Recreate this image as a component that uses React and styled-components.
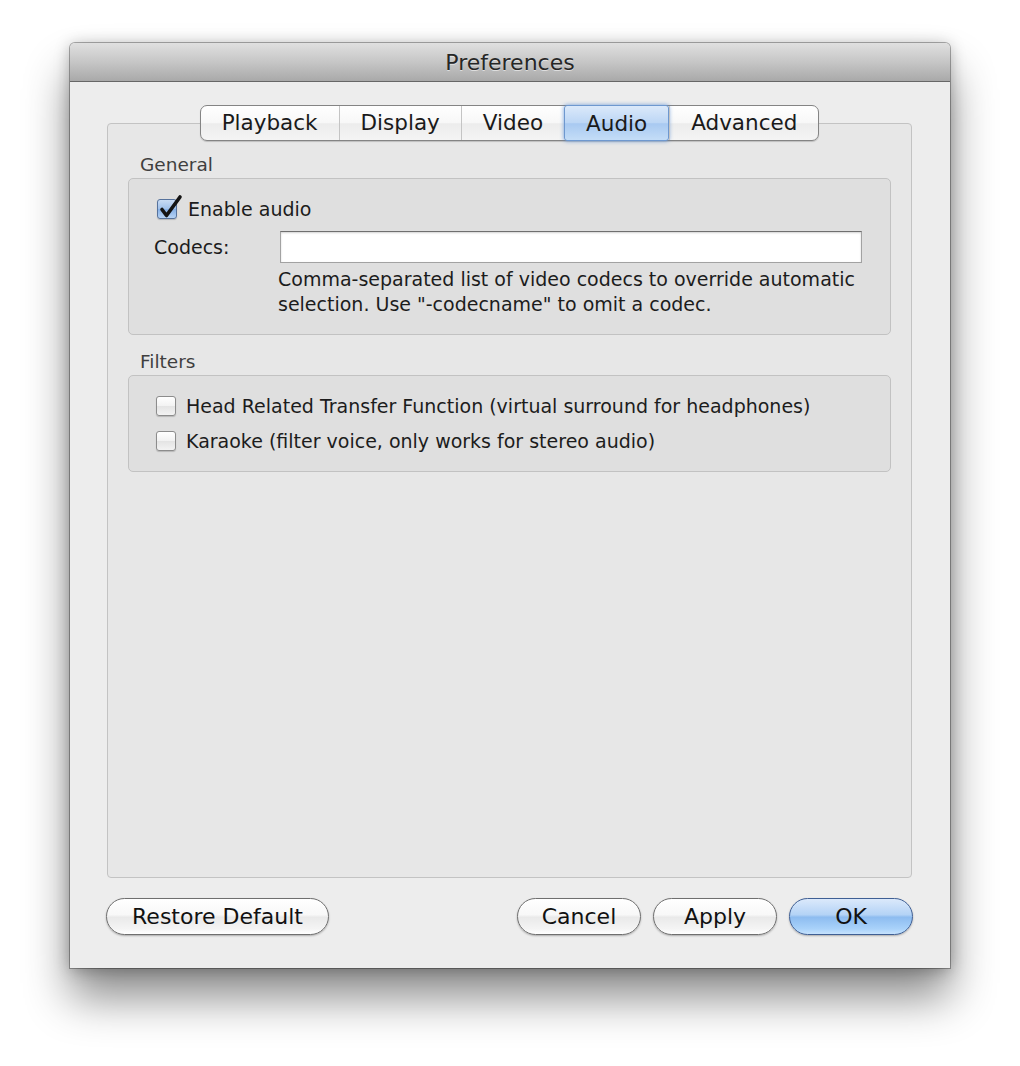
import React from "react";
import styled, { createGlobalStyle, css } from "styled-components";

const GlobalStyle = createGlobalStyle`
  html, body { margin: 0; background: #fff; }
  body { font-family: "DejaVu Sans", "Liberation Sans", sans-serif; color: #1c1c1c; }
  * { box-sizing: border-box; }
`;

const tabs = ["Playback", "Display", "Video", "Audio", "Advanced"];

function CheckBox({ checked }) {
  return (
    <Box checked={checked}>
      {checked && (
        <CheckMark width="28" height="28" viewBox="0 0 28 28">
          <path d="M5 15.5 L9.5 21.5 L23 3" fill="none" stroke="#141414" strokeWidth="3.6" strokeLinecap="round" strokeLinejoin="round" />
        </CheckMark>
      )}
    </Box>
  );
}

function App() {
  return (
    <Page>
      <GlobalStyle />
      <Window>
        <TitleBar>Preferences</TitleBar>
        <Body>
          <Tabs>
            {tabs.map((t, i) => (
              <Tab key={t} first={i === 0} active={t === "Audio"}>{t}</Tab>
            ))}
          </Tabs>
          <Panel>
            <SectionLabel>General</SectionLabel>
            <Group pad="19px 28px 17px 25px">
              <CheckRow indent={3}>
                <CheckBox checked />
                <span>Enable audio</span>
              </CheckRow>
              <FieldRow>
                <FieldLabel>Codecs:</FieldLabel>
                <TextField />
              </FieldRow>
              <Help>
                Comma-separated list of video codecs to override automatic
                <br />
                selection. Use "-codecname" to omit a codec.
              </Help>
            </Group>
            <SectionLabel top={16}>Filters</SectionLabel>
            <Group pad="19px 28px 19px 27px" gap={13}>
              <CheckRow>
                <CheckBox />
                <span>Head Related Transfer Function (virtual surround for headphones)</span>
              </CheckRow>
              <CheckRow>
                <CheckBox />
                <span>Karaoke (filter voice, only works for stereo audio)</span>
              </CheckRow>
            </Group>
          </Panel>
        </Body>
        <Footer>
          <Button w={223}>Restore Default</Button>
          <Spacer />
          <Button w={124}>Cancel</Button>
          <Button w={124}>Apply</Button>
          <Button w={124} primary>OK</Button>
        </Footer>
      </Window>
    </Page>
  );
}

const Page = styled.div`
  width: 1020px;
  height: 1066px;
  padding: 43px 0 0 70px;
  background: #fff;
`;
const Window = styled.div`
  width: 880px;
  height: 925px;
  display: flex;
  flex-direction: column;
  background: #ededed;
  border-radius: 5px 5px 0 0;
  box-shadow: 0 0 0 1px rgba(0,0,0,0.3), 0 30px 45px rgba(0,0,0,0.45), 0 2px 16px rgba(0,0,0,0.28);
`;
const TitleBar = styled.div`
  height: 39px;
  display: flex;
  align-items: center;
  justify-content: center;
  font-size: 22px;
  color: #262626;
  text-shadow: 0 1px 0 rgba(255,255,255,0.55);
  background: linear-gradient(#e0e0e0, #c6c6c6 50%, #a9a9a9);
  border-bottom: 1px solid #676767;
  border-radius: 5px 5px 0 0;
`;
const Body = styled.div`
  flex: 1;
  display: flex;
  flex-direction: column;
  padding: 23px 38px 0 37px;
`;
const Tabs = styled.div`
  align-self: center;
  display: flex;
  height: 36px;
  position: relative;
  z-index: 1;
  border: 1px solid #848484;
  border-radius: 7px;
  background: linear-gradient(#ffffff, #f7f7f7 50%, #ececec 52%, #f4f4f4);
  box-shadow: 0 1px 1px rgba(0,0,0,0.18);
`;
const Tab = styled.div`
  padding: 0 21px;
  font-size: 21.5px;
  line-height: 34px;
  color: #1a1a1a;
  border-left: ${p => (p.first ? "none" : "1px solid #c4c4c4")};
  ${p => p.active && css`
    margin: -1px 0;
    line-height: 36px;
    border: 1px solid #6e98cf;
    border-radius: 3px;
    background: linear-gradient(#dbe9fa, #bcd6f5 50%, #a8c9f1 52%, #c4ddf7);
    box-shadow: 0 0 4px rgba(70,130,210,0.75);
  `}
`;
const Panel = styled.div`
  flex: 1;
  margin-top: -18px;
  padding: 30px 20px 0 20px;
  background: #e7e7e7;
  border: 1px solid #c3c3c3;
  border-radius: 4px;
  display: flex;
  flex-direction: column;
`;
const SectionLabel = styled.div`
  margin: ${p => p.top || 0}px 0 2px 12px;
  font-size: 18.5px;
  line-height: 22px;
  color: #3f3f3f;
`;
const Group = styled.div`
  display: flex;
  flex-direction: column;
  gap: ${p => p.gap || 0}px;
  padding: ${p => p.pad};
  background: #dfdfdf;
  border: 1px solid #c2c2c2;
  border-radius: 5px;
`;
const CheckRow = styled.div`
  display: flex;
  align-items: center;
  gap: ${p => (p.indent ? 11 : 10)}px;
  height: 22px;
  margin-left: ${p => p.indent || 0}px;
  font-size: 19px;
`;
const Box = styled.span`
  position: relative;
  flex: none;
  width: 20px;
  height: 20px;
  border-radius: 3px;
  border: 1px solid ${p => (p.checked ? "#56729c" : "#8c8c8c")};
  background: ${p => (p.checked
    ? "linear-gradient(#c9dcf4, #9fc0ea 50%, #86b0e6 52%, #b6d3f5)"
    : "linear-gradient(#ffffff, #f2f2f2 50%, #e4e4e4 52%, #f3f3f3)")};
  box-shadow: 0 1px 1px rgba(0,0,0,0.18);
`;
const CheckMark = styled.svg`
  position: absolute;
  left: -1px;
  top: -6px;
`;
const FieldRow = styled.div`
  display: flex;
  align-items: center;
  margin-top: 11px;
`;
const FieldLabel = styled.div`
  width: 126px;
  font-size: 19px;
`;
const TextField = styled.div`
  flex: 1;
  height: 32px;
  background: #fff;
  border: 1px solid #a2a2a2;
  border-top-color: #6f6f6f;
  box-shadow: inset 0 1px 2px rgba(0,0,0,0.18);
`;
const Help = styled.div`
  margin: 4px 0 0 124px;
  font-size: 19px;
  line-height: 25px;
`;
const Footer = styled.div`
  display: flex;
  align-items: center;
  gap: 12px;
  padding: 20px 37px 33px 36px;
`;
const Spacer = styled.div`
  flex: 1;
`;
const Button = styled.div`
  width: ${p => p.w}px;
  height: 37px;
  display: flex;
  align-items: center;
  justify-content: center;
  font-size: 22px;
  color: #111;
  border-radius: 19px;
  border: 1px solid ${p => (p.primary ? "#3f5f94" : "#6f6f6f")};
  background: ${p => (p.primary
    ? "linear-gradient(#dbe9fb, #b4d3f6 45%, #8dbcf0 52%, #a9d2fa 85%, #c6e2fd)"
    : "linear-gradient(#ffffff, #f8f8f8 45%, #e9e9e9 52%, #f4f4f4 85%, #ffffff)")};
  box-shadow: 0 1px 2px rgba(0,0,0,0.28);
`;

export default App;
